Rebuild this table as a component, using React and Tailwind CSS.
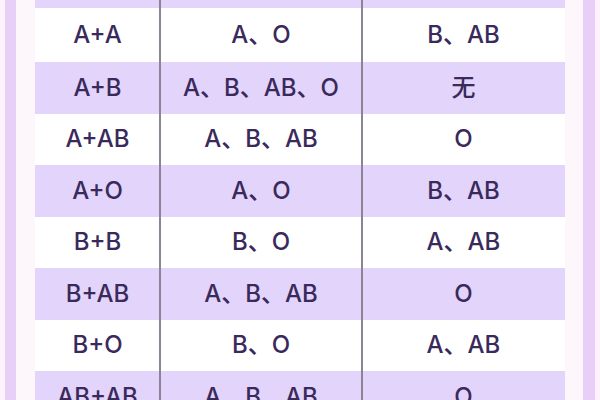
const rows = [
  ["A+A", "A、O", "B、AB"],
  ["A+B", "A、B、AB、O", "无"],
  ["A+AB", "A、B、AB", "O"],
  ["A+O", "A、O", "B、AB"],
  ["B+B", "B、O", "A、AB"],
  ["B+AB", "A、B、AB", "O"],
  ["B+O", "B、O", "A、AB"],
  ["AB+AB", "A、B、AB", "O"],
];

export default function App() {
  return (
    <div
      className="w-[600px] h-[400px] overflow-hidden bg-[#fdf7fc] flex text-[#3a2a5c]"
      style={{ fontFamily: 'Inter, "Noto Sans CJK SC", sans-serif' }}
    >
      {/* left strip */}
      <div className="w-[5px] bg-[#fbf2fc]" />
      <div className="w-[11px] bg-[#e8cff7]" />
      <div className="w-[19px]" />

      {/* table */}
      <div className="w-[530px] -mt-[41px] relative">
        <div className="h-[49px] bg-[#e2d4fa]" />
        {rows.map((r, i) => (
          <div
            key={i}
            className={
              "grid grid-cols-[125px_202px_203px] items-center text-center text-[24px] font-medium " +
              (i === 0 ? "h-[54px] " : "h-[51.5px] ") +
              (i % 2 === 1 ? "bg-[#e2d4fa]" : "bg-white")
            }
          >
            <span>{r[0]}</span>
            <span>{r[1]}</span>
            <span>{r[2]}</span>
          </div>
        ))}
        {/* column dividers */}
        <div className="absolute top-0 bottom-0 left-[124px] w-[2px] bg-[#8b8495]" />
        <div className="absolute top-0 bottom-0 left-[326px] w-[2px] bg-[#8b8495]" />
      </div>

      {/* right strip */}
      <div className="w-[18px]" />
      <div className="w-[12px] bg-[#e8cff7]" />
      <div className="w-[5px] bg-[#fbf2fc]" />
    </div>
  );
}
